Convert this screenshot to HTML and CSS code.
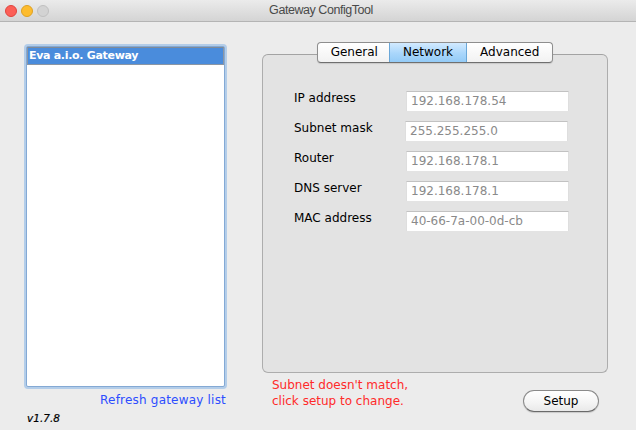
FILE: index.html
```html
<!DOCTYPE html>
<html>
<head>
<meta charset="utf-8">
<link rel="stylesheet" href="styles.css">
</head>
<body>
<div class="window">
  <div class="titlebar">
    <div class="lights">
      <span class="light red"></span>
      <span class="light yellow"></span>
      <span class="light gray"></span>
    </div>
    <div class="title">Gateway ConfigTool</div>
  </div>
  <div class="content">
    <div class="left">
      <div class="list">
        <div class="item selected">Eva a.i.o. Gateway</div>
      </div>
      <div class="refresh">Refresh gateway list</div>
      <div class="version">v1.7.8</div>
    </div>
    <div class="right">
      <div class="tabs">
        <div class="tab">General</div>
        <div class="tab active">Network</div>
        <div class="tab">Advanced</div>
      </div>
      <div class="tabbox">
        <div class="row"><div class="label">IP address</div><div class="field">192.168.178.54</div></div>
        <div class="row"><div class="label">Subnet mask</div><div class="field shift">255.255.255.0</div></div>
        <div class="row"><div class="label">Router</div><div class="field">192.168.178.1</div></div>
        <div class="row"><div class="label">DNS server</div><div class="field">192.168.178.1</div></div>
        <div class="row"><div class="label">MAC address</div><div class="field">40-66-7a-00-0d-cb</div></div>
      </div>
      <div class="footer">
        <div class="warning">Subnet doesn't match,<br>click setup to change.</div>
        <div class="button">Setup</div>
      </div>
    </div>
  </div>
</div>
</body>
</html>
```
FILE: styles.css
```css
html, body {
  margin: 0;
  padding: 0;
  background: #ececec;
}
.window {
  width: 636px;
  height: 430px;
  background: #ececec;
  font-family: "DejaVu Sans", sans-serif;
  font-size: 12px;
  color: #000;
  overflow: hidden;
}
.titlebar {
  height: 21px;
  border-bottom: 1px solid #b4b4b4;
  background: linear-gradient(#ebebeb, #d4d4d4);
  display: flex;
  align-items: center;
  position: relative;
}
.lights {
  display: flex;
  gap: 4px;
  padding-left: 5px;
  position: relative;
  z-index: 1;
}
.light {
  width: 12px;
  height: 12px;
  border-radius: 50%;
  box-sizing: border-box;
}
.light.red { background: #fc5f57; border: 1px solid #e0443e; }
.light.yellow { background: #fdbc2e; border: 1px solid #dea123; }
.light.gray { background: #d3d3d3; border: 1px solid #c0c0c0; }
.title {
  position: absolute;
  left: 0;
  right: 0;
  top: 0;
  line-height: 21px;
  text-align: center;
  font-family: "Liberation Sans", sans-serif;
  font-size: 12.5px;
  letter-spacing: -0.45px;
  color: #4a4a4a;
  padding-left: 6px;
}
.content {
  display: flex;
  gap: 35px;
}
.left {
  margin-left: 24px;
  padding-top: 22px;
  width: 203px;
  display: flex;
  flex-direction: column;
}
.list {
  height: 339px;
  background: #fff;
  border: 1px solid #84a9d4;
  box-shadow: 0 0 0 2px #b3cde9;
  margin: 2px;
  border-radius: 2px;
}
.item {
  height: 16px;
  line-height: 16px;
  padding-left: 1px;
  font-weight: bold;
  font-size: 11px;
  letter-spacing: -0.3px;
}
.item.selected {
  background: #4a8cdc;
  color: #fff;
  border: 1px solid #8b96a4;
  border-top-color: #7f8a98;
}
.refresh {
  text-align: right;
  color: #2d4dff;
  margin-top: 3px;
  padding-right: 1px;
  line-height: 16px;
  letter-spacing: 0.2px;
}
.version {
  font-style: italic;
  font-size: 10.5px;
  padding-left: 3px;
  margin-top: 3px;
  line-height: 14px;
  -webkit-text-stroke: 0.2px #000;
}
.right {
  width: 346px;
  padding-top: 20px;
  display: flex;
  flex-direction: column;
}
.tabs {
  align-self: center;
  display: flex;
  height: 19px;
  border: 1px solid #8e8e8e;
  border-bottom-color: #6f6f6f;
  border-radius: 4px;
  background: linear-gradient(#ffffff, #f2f2f2);
  box-shadow: 0 1px 1px rgba(0,0,0,0.12);
  margin-bottom: -9px;
  position: relative;
  z-index: 1;
  overflow: hidden;
}
.tab {
  line-height: 19px;
  padding: 0 13px;
  border-left: 1px solid #b0b0b0;
}
.tab:first-child {
  border-left: none;
  padding: 0 11px 0 13px;
}
.tab.active {
  background: linear-gradient(#d2eaff, #a9d6fb 55%, #94cbf7);
  border-left-color: #6aa7d8;
  border-right: 1px solid #6aa7d8;
}
.tab.active + .tab {
  border-left: none;
}
.tabbox {
  height: 286px;
  background: #e3e3e3;
  border: 1px solid #adadad;
  border-top-color: #a3a3a3;
  border-radius: 6px;
  padding-top: 31px;
  padding-left: 31px;
}
.row {
  height: 30px;
  display: flex;
  align-items: center;
}
.label {
  width: 112px;
  margin-top: -6px;
}
.field {
  width: 157px;
  height: 19px;
  line-height: 19px;
  background: #fff;
  border-top: 1px solid #c2c2c2;
  border-left: 1px solid #dedede;
  border-right: 1px solid #dedede;
  padding-left: 4px;
  color: #8a8a8a;
}
.field.shift {
  margin-left: -1px;
}
.footer {
  display: flex;
  justify-content: space-between;
  padding-left: 10px;
  padding-right: 9px;
  margin-top: 4px;
}
.warning {
  color: #ff2a2a;
  line-height: 16px;
}
.button {
  margin-top: 13px;
  width: 74px;
  height: 20px;
  line-height: 20px;
  text-align: center;
  border: 1px solid #8a8a8a;
  border-bottom-color: #6a6a6a;
  border-radius: 11px;
  background: linear-gradient(#ffffff, #f4f4f4 60%, #e9e9e9);
  box-shadow: 0 1px 1px rgba(0,0,0,0.15);
}
```
